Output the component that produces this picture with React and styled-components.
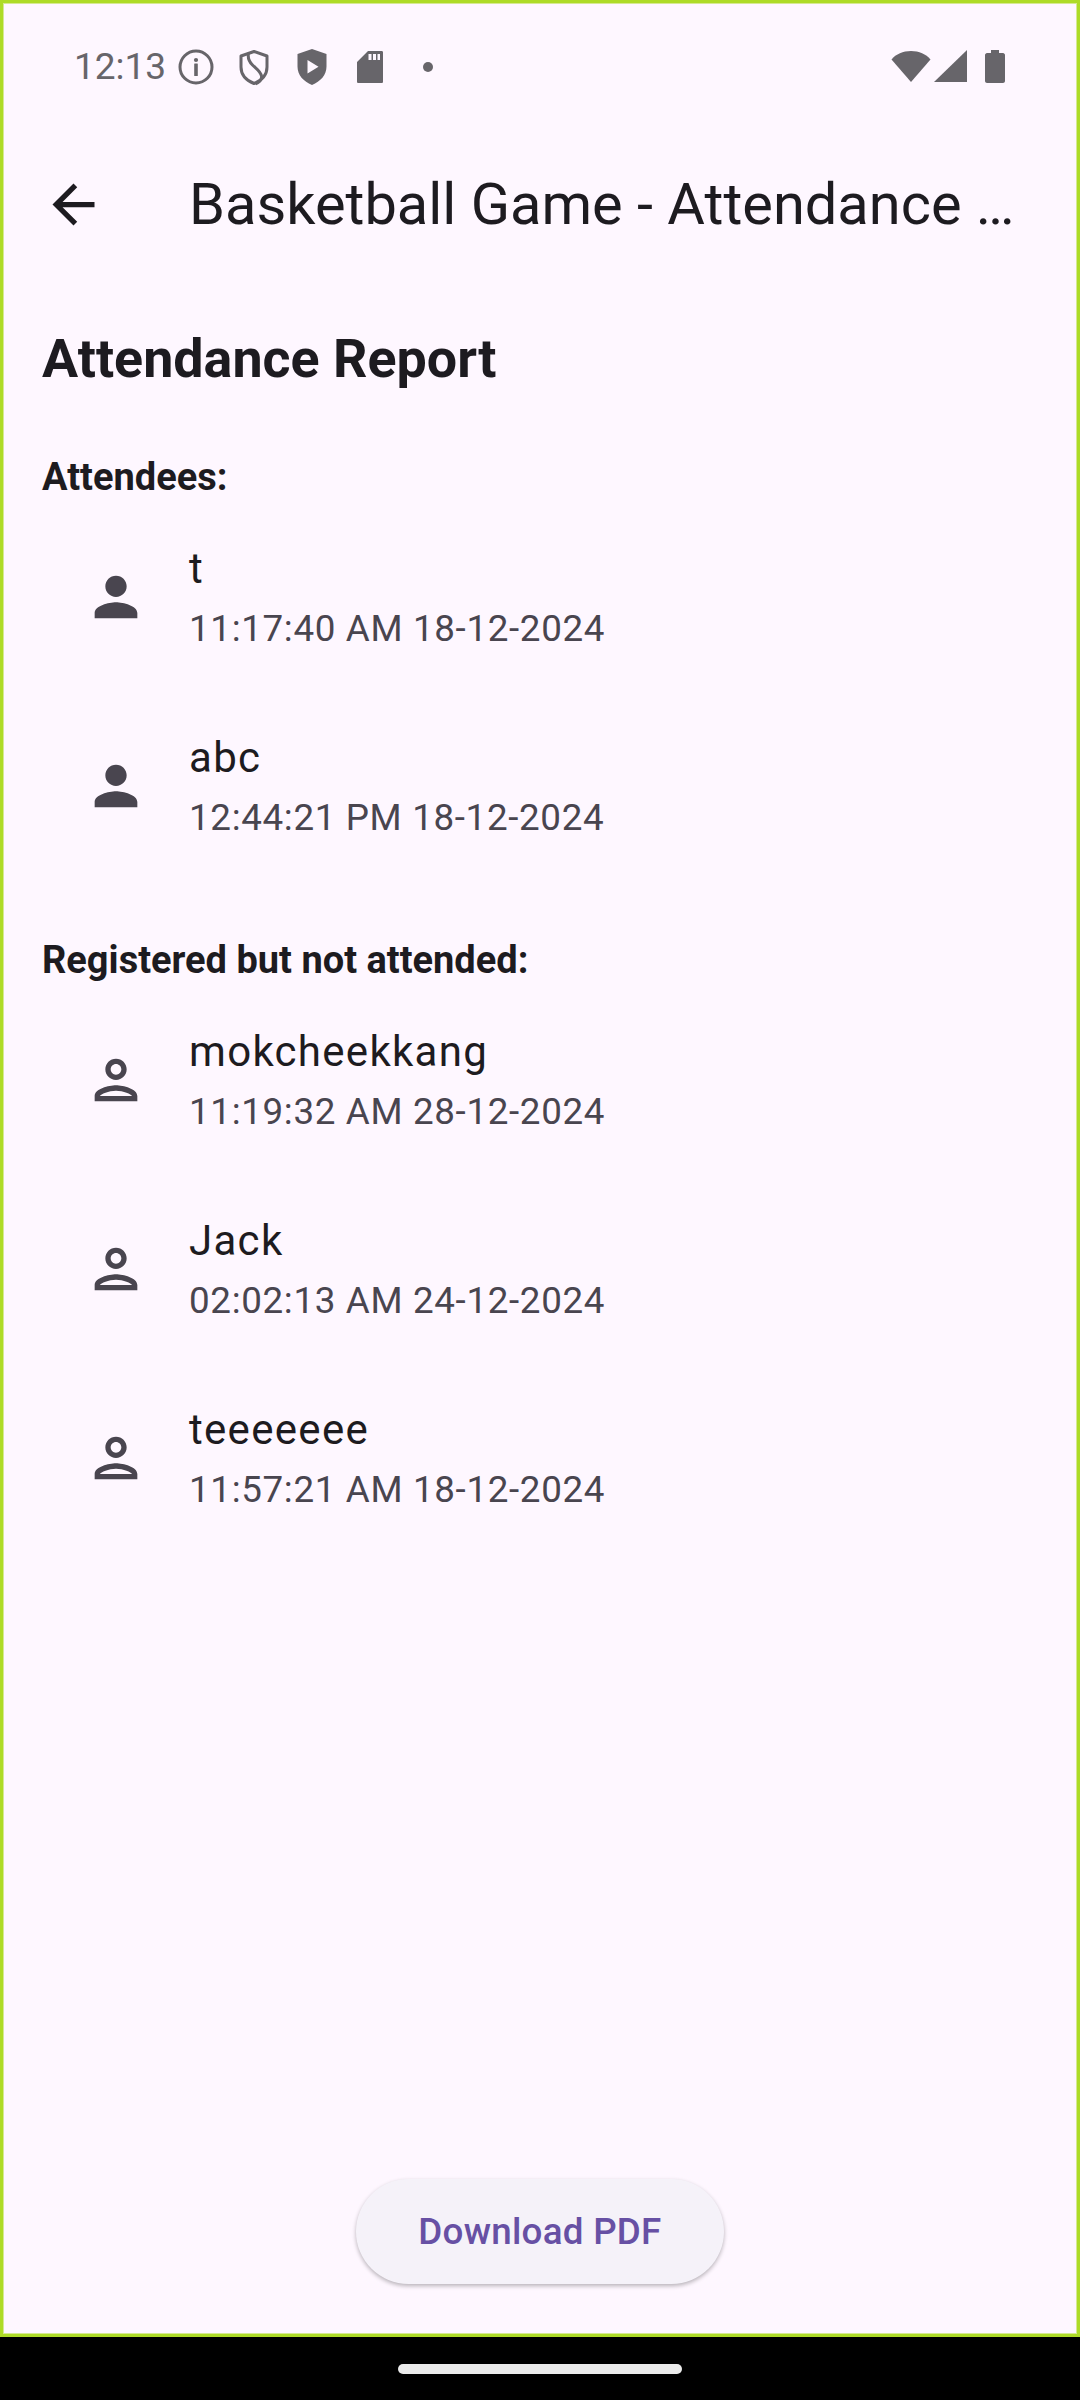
import React from "react";
import styled, { createGlobalStyle } from "styled-components";

const Global = createGlobalStyle`
  html, body { margin: 0; padding: 0; background: #000; }
  * { box-sizing: border-box; }
`;
const Page = styled.div`
  width: 1080px; height: 2400px; display: flex; flex-direction: column;
  font-family: Roboto, "Liberation Sans", sans-serif; background: #000;
`;
const Screen = styled.div`
  height: 2337px; border: 3px solid #aedb28; background: #fef7ff;
  box-shadow: inset 0 0 0 1px rgba(174, 219, 40, 0.5);
  display: flex; flex-direction: column;
`;
const StatusBar = styled.div`
  height: 128px; padding: 0 71px 0 71px; display: flex; align-items: center;
  justify-content: space-between; color: #67656a; flex: none;
`;
const StatusGroup = styled.div`display: flex; align-items: center;`;
const Time = styled.span`
  width: 93px; font-size: 37px; line-height: 44px; white-space: nowrap;
`;
const StatusSlot = styled.svg`display: block; width: ${p => p.$w || 58}px; height: 44px; fill: currentColor;`;
const AppBar = styled.header`
  height: 154px; display: flex; align-items: center; flex: none; margin-top: -4px;
`;
const BackButton = styled.button`
  width: 186px; height: 110px; padding: 0 0 0 39px; border: 0; background: none; display: flex; align-items: center; color: #1d1b20; flex: none;
`;
const Title = styled.h1`
  margin: 0; font-size: 57.75px; font-weight: 400; color: #1d1b20; white-space: nowrap; letter-spacing: 0;
`;
const Content = styled.main`flex: 1; padding: 0 0 0 39px; display: flex; flex-direction: column;`;
const Heading = styled.h2`
  margin: 48px 0 62px; font-size: 53.8px; line-height: 60px; font-weight: 700; color: #1d1b20;
`;
const SectionTitle = styled.h3`
  margin: 0; font-size: 38px; line-height: 52px; font-weight: 700; color: #1d1b20;
`;
const Section = styled.section`margin-bottom: 53px;`;
const Row = styled.div`height: 189px; display: flex; align-items: center;`;
const Avatar = styled.svg`width: 64px; height: 64px; margin: -2px 41px 0 42px; fill: #49454f; flex: none;`;
const RowText = styled.div`display: flex; flex-direction: column; margin-top: 3px;`;
const Name = styled.div`font-size: 42px; line-height: 60px; color: #1d1b20; letter-spacing: 1.3px;`;
const Sub = styled.div`font-size: 36.75px; line-height: 60px; color: #49454f; letter-spacing: 0.66px;`;
const Spacer = styled.div`flex: 1;`;
const Footer = styled.div`
  height: 155px; flex: none; display: flex; justify-content: center; margin-left: -39px;
`;
const DownloadButton = styled.button`
  width: 368px; height: 105px; border: 0; border-radius: 53px; background: #f5f2f9;
  box-shadow: 0 2px 4px rgba(0,0,0,0.28); color: #6750a4; font: 500 36.75px Roboto, sans-serif; letter-spacing: 0.26px;
`;
const Nav = styled.div`flex: 1; display: flex; align-items: center; justify-content: center; padding-top: 1px;`;
const Pill = styled.div`width: 284px; height: 10px; border-radius: 5px; background: #ebebeb;`;

const Person = ({ filled }) => (
  <Avatar viewBox="0 0 24 24">
    {filled ? (
      <path d="M12 12c2.21 0 4-1.79 4-4s-1.79-4-4-4-4 1.79-4 4 1.79 4 4 4zm0 2c-2.67 0-8 1.34-8 4v2h16v-2c0-2.66-5.33-4-8-4z" />
    ) : (
      <path d="M12 6c1.1 0 2 .9 2 2s-.9 2-2 2-2-.9-2-2 .9-2 2-2m0 10c2.7 0 5.8 1.29 6 2H6c.23-.72 3.31-2 6-2m0-12C9.79 4 8 5.79 8 8s1.79 4 4 4 4-1.79 4-4-1.79-4-4-4zm0 10c-2.67 0-8 1.34-8 4v2h16v-2c0-2.66-5.33-4-8-4z" />
    )}
  </Avatar>
);

const attendees = [
  { name: "t", sub: "11:17:40 AM 18-12-2024" },
  { name: "abc", sub: "12:44:21 PM 18-12-2024" },
];
const absent = [
  { name: "mokcheekkang", sub: "11:19:32 AM 28-12-2024" },
  { name: "Jack", sub: "02:02:13 AM 24-12-2024" },
  { name: "teeeeeee", sub: "11:57:21 AM 18-12-2024" },
];

const PersonRow = ({ item, filled }) => (
  <Row>
    <Person filled={filled} />
    <RowText>
      <Name>{item.name}</Name>
      <Sub>{item.sub}</Sub>
    </RowText>
  </Row>
);

export default function App() {
  return (
    <Page>
      <Global />
      <Screen>
        <StatusBar>
          <StatusGroup>
            <Time>12:13</Time>
            <StatusSlot viewBox="0 0 58 44">
              <circle cx="29" cy="22" r="16" fill="none" stroke="currentColor" strokeWidth="3" />
              <circle cx="29" cy="15" r="2.1" />
              <rect x="27.2" y="18.5" width="3.6" height="12.5" rx="0.5" />
            </StatusSlot>
            <StatusSlot viewBox="0 0 58 44">
              <path d="M29 6.5l13 4.5v11c0 8-5.5 13.5-13 16.5-7.500-3-13-8.500-13-16.500V11z" fill="none" stroke="currentColor" strokeWidth="3" strokeLinejoin="round" />
              <path d="M23.5 8c-1 5 0 8 4 12s8 6 9 11c.5 3-2 6-6 8" fill="none" stroke="currentColor" strokeWidth="3" />
            </StatusSlot>
            <StatusSlot viewBox="0 0 58 44">
              <path fillRule="evenodd" d="M29 4l14.500 5v12.500c0 8.500-6 15-14.500 18.500-8.500-3.500-14.500-10-14.500-18.500V9zM24.500 15v13.500l11-6.750z" />
            </StatusSlot>
            <StatusSlot viewBox="0 0 58 44">
              <path fillRule="evenodd" d="M27 6h13.500c1 0 1.500.5 1.500 1.500v29c0 1-.5 1.500-1.500 1.500h-23c-1 0-1.500-.5-1.500-1.500V17zM27.500 9v6h3V9zM32 9v6h3V9zM36.500 9v6h2.500V9z" />
            </StatusSlot>
            <StatusSlot viewBox="0 0 58 44">
              <circle cx="29" cy="22" r="5" />
            </StatusSlot>
          </StatusGroup>
          <StatusGroup>
            <StatusSlot $w={42} viewBox="0 0 42 44">
              <path d="M21 37L1.500 14.500C6 9 13 6 21 6s15 3 19.500 8.500z" />
            </StatusSlot>
            <StatusSlot $w={52} viewBox="0 0 52 44">
              <path d="M2 37L35 5v32z" />
            </StatusSlot>
            <StatusSlot $w={22} viewBox="0 0 22 44">
              <path d="M7 5h8v3h4c1 0 2 1 2 2v26c0 1-1 2-2 2H3c-1 0-2-1-2-2V10c0-1 1-2 2-2h4z" />
            </StatusSlot>
          </StatusGroup>
        </StatusBar>
        <AppBar>
          <BackButton aria-label="Back">
            <svg width="63" height="63" viewBox="0 0 24 24" fill="currentColor">
              <path d="M20 11H7.83l5.59-5.59L12 4l-8 8 8 8 1.41-1.41L7.83 13H20v-2z" />
            </svg>
          </BackButton>
          <Title>Basketball Game - Attendance …</Title>
        </AppBar>
        <Content>
          <Heading>Attendance Report</Heading>
          <Section>
            <SectionTitle>Attendees:</SectionTitle>
            {attendees.map(i => <PersonRow key={i.name} item={i} filled />)}
          </Section>
          <Section>
            <SectionTitle>Registered but not attended:</SectionTitle>
            {absent.map(i => <PersonRow key={i.name} item={i} />)}
          </Section>
          <Spacer />
          <Footer>
            <DownloadButton>Download PDF</DownloadButton>
          </Footer>
        </Content>
      </Screen>
      <Nav><Pill /></Nav>
    </Page>
  );
}
